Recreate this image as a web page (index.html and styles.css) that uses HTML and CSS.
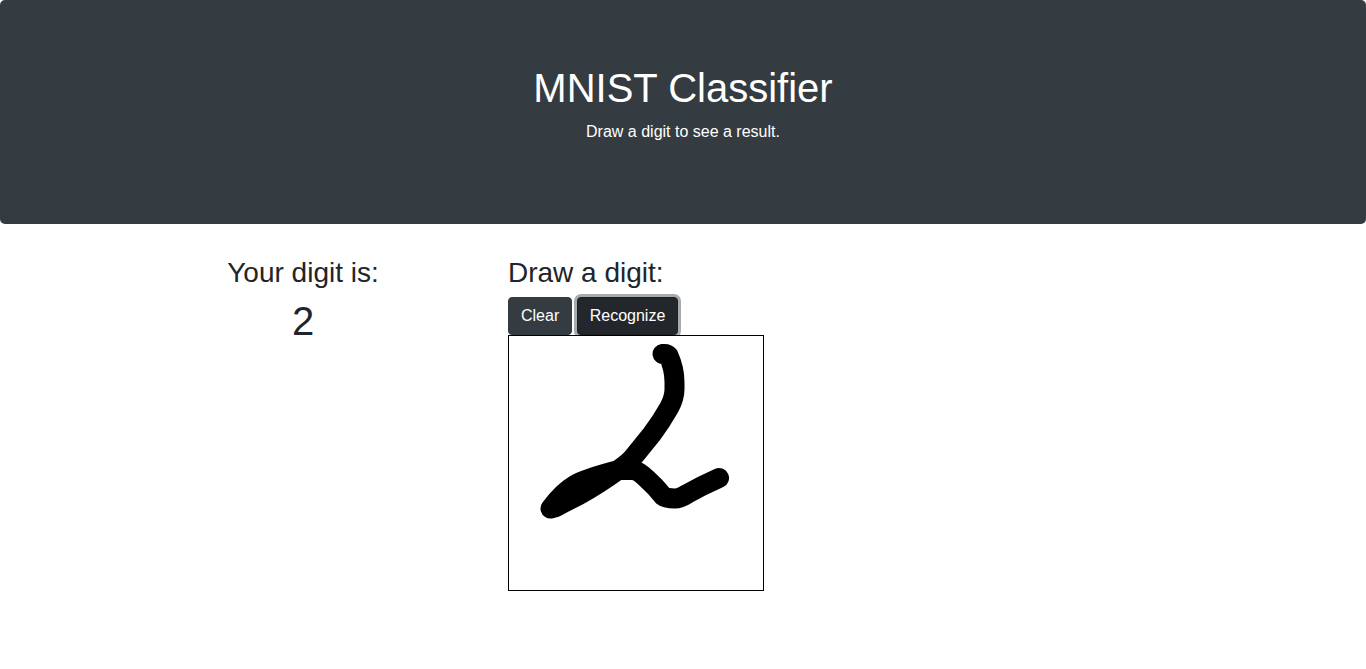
FILE: index.html
```html
<!DOCTYPE html>
<html lang="en">
<head>
  <meta charset="utf-8">
  <meta name="viewport" content="width=device-width, initial-scale=1">
  <title>MNIST Classifier</title>
  <link rel="stylesheet" href="styles.css">
</head>
<body>
  <header class="hero">
    <h1 class="hero-title">MNIST Classifier</h1>
    <p class="hero-text">Draw a digit to see a result.</p>
  </header>
  <main class="container">
    <section class="column result">
      <h2 class="heading">Your digit is:</h2>
      <output class="digit">2</output>
    </section>
    <section class="column">
      <h2 class="heading">Draw a digit:</h2>
      <div class="actions">
        <button type="button" class="btn">Clear</button>
        <button type="button" class="btn btn-active">Recognize</button>
      </div>
      <svg class="pad" viewBox="0 0 254 254" role="img" aria-label="Drawing area">
        <path class="stroke" d="M153.500 18Q158 17.500 159.500 19.500Q165.500 33 165.500 46V53Q165.500 62 160 72Q152 86 143 98L126 119Q121 126 109 134Q88 149 70 159Q58 165 47 171L41.500 172.500Q54 156 66 149Q76 143 106 135L112 134H124Q130 135 138 143Q146 150 154 160Q157 162.500 166 162.500Q171 162.500 178 158L193 150L210 142"/>
      </svg>
    </section>
  </main>
</body>
</html>
```
FILE: styles.css
```css
*,
*::before,
*::after {
  box-sizing: border-box;
}

body {
  margin: 0;
  background: #fff;
  color: #212529;
  font-family: "Liberation Sans", Arial, sans-serif;
  font-size: 16px;
  line-height: 24px;
}

.hero {
  margin-bottom: 32px;
  padding: 64px 32px;
  border-radius: 5px;
  background: #343b41;
  color: #fff;
  text-align: center;
}

.hero-title {
  margin: 0 0 8px;
  font-size: 40px;
  font-weight: 500;
  line-height: 48px;
}

.hero-text {
  margin: 0 0 16px;
}

.container {
  display: grid;
  grid-template-columns: repeat(3, 1fr);
  max-width: 1140px;
  margin: 0 auto;
}

.column {
  padding: 0 15px;
}

.result {
  text-align: center;
}

.heading {
  margin: 0 0 8px;
  font-size: 28px;
  font-weight: 500;
  line-height: 33px;
}

.digit {
  display: block;
  font-size: 40px;
  line-height: 48px;
}

.btn {
  display: inline-block;
  padding: 6px 12px;
  border: 1px solid #343b41;
  border-radius: 4px;
  background: #343b41;
  color: #fff;
  font: inherit;
  vertical-align: middle;
  cursor: pointer;
}

.btn-active,
.btn:focus {
  border-color: #1d2124;
  background: #23272b;
  outline: 0;
  box-shadow: 0 0 0 3px #a8abae;
}

/* Positioned so that it covers the focus ring of the buttons above. */
.pad {
  position: relative;
  display: block;
  width: 256px;
  max-width: 100%;
  border: 1px solid #000;
  background: #fff;
}

.stroke {
  fill: none;
  stroke: #000;
  stroke-width: 20px;
  stroke-linecap: round;
  stroke-linejoin: round;
}

@media (max-width: 767px) {
  .container {
    grid-template-columns: 1fr;
    row-gap: 24px;
  }
}
```
